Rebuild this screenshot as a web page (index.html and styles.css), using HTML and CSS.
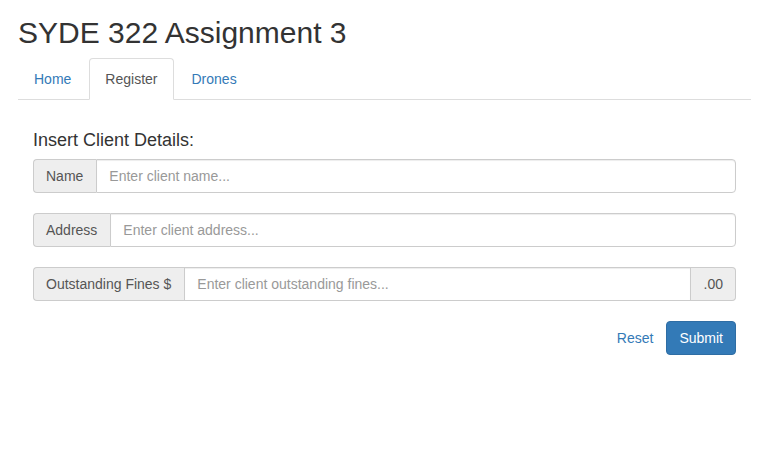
FILE: index.html
```html
<!DOCTYPE html>
<html>
<head>
<meta charset="utf-8">
<title>SYDE 322 Assignment 3</title>
<link rel="stylesheet" href="styles.css">
</head>
<body>
<div class="page">
  <h2 class="title">SYDE 322 Assignment 3</h2>
  <ul class="tabs">
    <li><a href="#">Home</a></li>
    <li class="active"><a href="#">Register</a></li>
    <li><a href="#">Drones</a></li>
  </ul>
  <form class="panel">
    <h4 class="panel-title">Insert Client Details:</h4>
    <div class="group">
      <span class="addon">Name</span>
      <input class="field" type="text" placeholder="Enter client name...">
    </div>
    <div class="group">
      <span class="addon">Address</span>
      <input class="field" type="text" placeholder="Enter client address...">
    </div>
    <div class="group">
      <span class="addon">Outstanding Fines $</span>
      <input class="field" type="text" placeholder="Enter client outstanding fines...">
      <span class="addon addon-end">.00</span>
    </div>
    <div class="actions">
      <button type="button" class="btn btn-link">Reset</button>
      <button type="button" class="btn btn-primary">Submit</button>
    </div>
  </form>
</div>
</body>
</html>
```
FILE: styles.css
```css
* { box-sizing: border-box; }
body {
  margin: 0;
  font-family: "Liberation Sans", Arial, sans-serif;
  font-size: 14px;
  line-height: 20px;
  color: #333;
  background: #fff;
}
.page { padding: 0 18px; }
.title {
  font-size: 30px;
  font-weight: 500;
  line-height: 33px;
  margin: 16px 0 9px;
}
.tabs {
  list-style: none;
  margin: 0;
  padding: 0;
  display: flex;
  border-bottom: 1px solid #ddd;
}
.tabs li { margin-bottom: -1px; }
.tabs a {
  display: block;
  padding: 10px 15px;
  margin-right: 2px;
  line-height: 20px;
  border: 1px solid transparent;
  border-radius: 4px 4px 0 0;
  color: #337ab7;
  text-decoration: none;
}
.tabs .active a {
  color: #555;
  background: #fff;
  border-color: #ddd #ddd transparent;
}
.panel { padding: 30px 15px 0; }
.panel-title {
  font-size: 18px;
  font-weight: 500;
  line-height: 20px;
  margin: 0 0 9px;
}
.group {
  display: flex;
  height: 34px;
  margin-bottom: 20px;
}
.addon {
  padding: 6px 13px 6px 12px;
  background: #eee;
  border: 1px solid #ccc;
  border-right: 0;
  border-radius: 4px 0 0 4px;
  color: #555;
  line-height: 20px;
  white-space: nowrap;
}
.addon-end {
  padding: 6px 12px 6px 13px;
  border-right: 1px solid #ccc;
  border-left: 0;
  border-radius: 0 4px 4px 0;
}
.field {
  flex: 1;
  min-width: 0;
  padding: 6px 12px;
  border: 1px solid #ccc;
  border-radius: 0 4px 4px 0;
  font: inherit;
  color: #555;
  box-shadow: inset 0 1px 1px rgba(0,0,0,.075);
}
.group .field:not(:last-child) { border-radius: 0; }
.field::placeholder { color: #999; }
.actions {
  display: flex;
  justify-content: flex-end;
  margin-top: 1px;
}
.btn {
  font: inherit;
  line-height: 20px;
  padding: 6px 12px;
  border: 1px solid transparent;
  border-radius: 4px;
  cursor: pointer;
}
.btn-link {
  background: transparent;
  color: #337ab7;
}
.btn-primary {
  background: #337ab7;
  border-color: #2e6da4;
  color: #fff;
}
```
